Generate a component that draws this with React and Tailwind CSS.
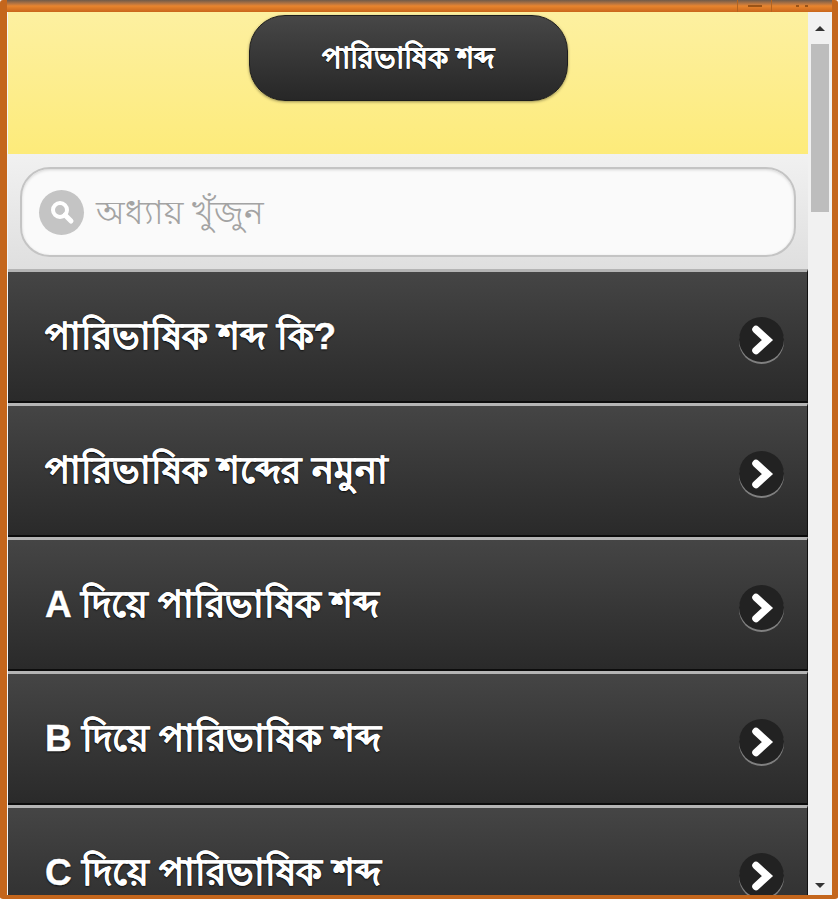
import React from "react";

const rows = [
  "পারিভাষিক শব্দ কি?",
  "পারিভাষিক শব্দের নমুনা",
  "A দিয়ে পারিভাষিক শব্দ",
  "B দিয়ে পারিভাষিক শব্দ",
  "C দিয়ে পারিভাষিক শব্দ",
];

const ListRow = ({ label }) => (
  <div className="h-[134px] first:h-[132px] shrink-0 flex items-center justify-between pl-[37px] pr-[23px] border-t-[3px] border-t-[#b4b4b4] first:border-t-[#5a5a5a] border-b-2 border-b-[#0c0c0c] border-r border-r-[#111111] bg-gradient-to-b from-[#454545] to-[#2a2a2a]">
    <span className="text-[37px] leading-none font-bold text-white [-webkit-text-stroke:0.4px_#ffffff] [text-shadow:0_1px_2px_#000]">
      {label}
    </span>
    {/* Arrow badge */}
    <span className="mt-[6px] w-[45px] h-[45px] rounded-full bg-[#222222] flex items-center justify-center shadow-[0_2px_0_#808080]">
      <svg width="26" height="30" viewBox="0 0 26 30" fill="none">
        <path
          d="M7 4.5L18.5 15L7 25.5"
          stroke="#ffffff"
          strokeWidth="7.5"
          strokeLinecap="round"
          strokeLinejoin="miter"
        />
      </svg>
    </span>
  </div>
);

const Scrollbar = () => (
  <div className="w-[24px] shrink-0 bg-[#f1f1f1] flex flex-col items-center">
    <div className="h-[32px] flex items-center justify-center">
      <div className="w-0 h-0 border-x-[5px] border-x-transparent border-b-[5px] border-b-[#333333]" />
    </div>
    <div className="w-[18px] h-[168px] bg-[#bdbdbd]" />
    <div className="flex-1" />
    <div className="h-[20px] flex items-center justify-center">
      <div className="w-0 h-0 border-x-[5px] border-x-transparent border-t-[5px] border-t-[#333333]" />
    </div>
  </div>
);

export default function App() {
  return (
    <div className="w-[840px] h-[900px] overflow-hidden bg-white font-['Liberation_Sans','Noto_Sans',sans-serif]">
      <div className="h-[899px] w-[838px] flex flex-col bg-[#c9671a] border-l-[7px] border-r-[6px] border-b-[4px] border-[#c4661c] rounded-[3px]">
        {/* Title bar */}
        <div className="h-[12px] shrink-0 bg-gradient-to-b from-[#6f5a48] via-[#e8852e] to-[#c9661a] flex justify-end">
          <div className="w-[34px] border-l border-[#b5641f] flex justify-center items-start pt-[5px]">
            <div className="w-[14px] h-[2px] bg-[#9a5316]" />
          </div>
          <div className="w-[61px] border-l border-[#b5641f] flex justify-center items-start gap-[6px] pt-[5px]">
            <div className="w-[3px] h-[2px] bg-[#9a5316]" />
            <div className="w-[3px] h-[2px] bg-[#9a5316]" />
          </div>
        </div>

        <div className="flex-1 min-h-0 flex border-l border-[#f5f5f5] overflow-hidden">
          <div className="flex-1 min-w-0 flex flex-col overflow-hidden">
            {/* Header */}
            <div className="h-[142px] shrink-0 bg-gradient-to-b from-[#fdf0a0] to-[#fdeb7a] flex justify-center items-start pt-[3px]">
              <div className="w-[319px] h-[86px] rounded-[36px] bg-gradient-to-b from-[#474747] to-[#272727] border border-[#1c1c1c] shadow-[0_1px_3px_rgba(0,0,0,0.4)] flex items-center justify-center">
                <span className="text-[29px] leading-none font-bold text-white [-webkit-text-stroke:0.3px_#ffffff] [text-shadow:0_1px_1px_#000]">
                  পারিভাষিক শব্দ
                </span>
              </div>
            </div>

            {/* Search */}
            <div className="h-[115px] shrink-0 bg-gradient-to-b from-[#f1f1f1] to-[#dfdfdf] px-[12px] pt-[13px]">
              <div className="h-[90px] rounded-[30px] bg-[#fafafa] border-2 border-[#c4c4c4] shadow-[inset_0_1px_3px_rgba(0,0,0,0.15)] flex items-center pl-[17px] gap-[12px]">
                <span className="w-[45px] h-[45px] rounded-full bg-[#c4c4c4] flex items-center justify-center">
                  <svg width="30" height="30" viewBox="0 0 30 30" fill="none">
                    <circle cx="13" cy="13" r="7" stroke="#ffffff" strokeWidth="4" />
                    <path d="M18 18L24 24" stroke="#ffffff" strokeWidth="5" strokeLinecap="round" />
                  </svg>
                </span>
                <span className="text-[33px] leading-none text-[#a3a3a3]">অধ্যায় খুঁজুন</span>
              </div>
            </div>

            {/* List */}
            {rows.map((label) => (
              <ListRow key={label} label={label} />
            ))}
          </div>
          <Scrollbar />
        </div>
      </div>
    </div>
  );
}
